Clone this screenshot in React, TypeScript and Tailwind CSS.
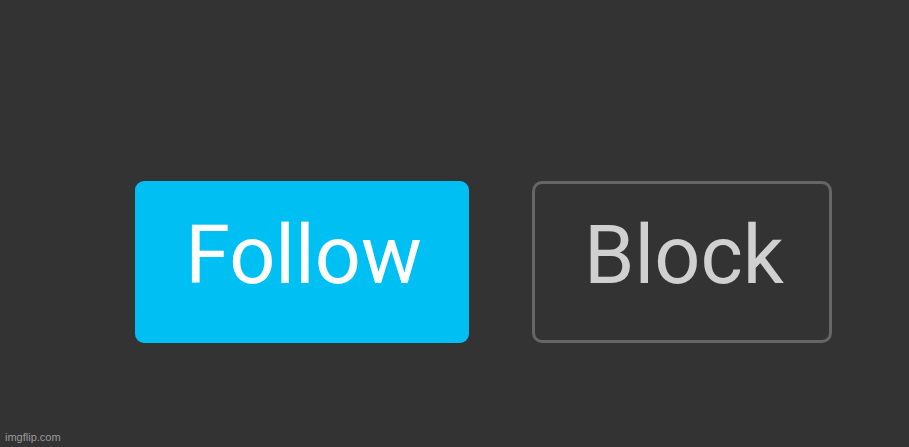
export default function App() {
  return (
    <div
      className="w-[909px] h-[447px] bg-[#333333] flex flex-col"
      style={{ fontFamily: "Roboto, 'Liberation Sans', sans-serif" }}
    >
      <div className="flex pt-[181px] pl-[135px] gap-[63px]">
        <button className="w-[334px] h-[162px] rounded-[9px] bg-[#00bff3] text-white text-[81px] leading-none flex items-center justify-center pb-[13px] pl-[3px]">
          Follow
        </button>
        <button className="w-[300px] h-[162px] rounded-[10px] border-[3px] border-[#666666] bg-[#333333] text-[#d0d0d0] text-[81px] leading-none flex items-center justify-center pb-[13px] pl-[4px]">
          Block
        </button>
      </div>
      <div className="mt-auto pl-[5px] pb-[3px] text-[11px] leading-[13px] text-[#9a9a9a]" style={{ fontFamily: "'Liberation Sans', Arial, sans-serif" }}>
        imgflip.com
      </div>
    </div>
  );
}
